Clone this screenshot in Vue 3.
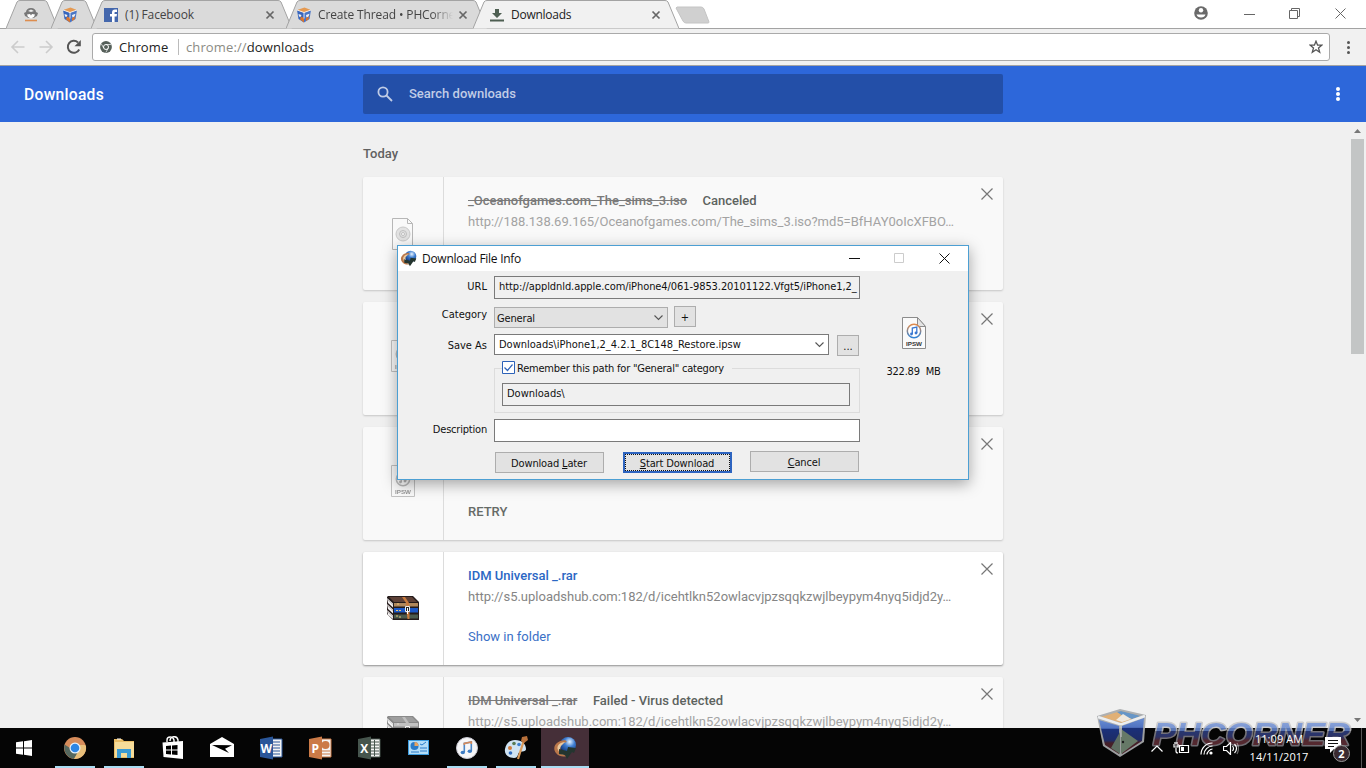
<template>
  <div class="screen">
    <!-- shared icons -->
    <svg class="defs" width="0" height="0">
      <defs>
        <linearGradient id="markFill" x1="0" y1="0" x2="0" y2="1">
          <stop offset="0" stop-color="#8ba5dc" />
          <stop offset=".41" stop-color="#6384cc" />
          <stop offset=".43" stop-color="#2c3d80" />
          <stop offset=".58" stop-color="#343a72" />
          <stop offset=".68" stop-color="#5c2d35" />
          <stop offset="1" stop-color="#6b3038" />
        </linearGradient>
        <linearGradient id="markEdge" x1="0" y1="0" x2="0" y2="1">
          <stop offset="0" stop-color="#cfcfd1" />
          <stop offset=".41" stop-color="#c2c2c5" />
          <stop offset=".43" stop-color="#85838a" />
          <stop offset="1" stop-color="#77747a" />
        </linearGradient>
        <linearGradient id="cubeSide" x1="0" y1="0" x2="0" y2="1">
          <stop offset="0" stop-color="#5b83cf" />
          <stop offset=".26" stop-color="#4468bd" />
          <stop offset=".28" stop-color="#1c3484" />
          <stop offset=".6" stop-color="#21306f" />
          <stop offset=".68" stop-color="#4a222b" />
          <stop offset="1" stop-color="#54252e" />
        </linearGradient>
        <radialGradient id="globe" cx=".6" cy=".3" r=".7">
          <stop offset="0" stop-color="#e8f4ff" />
          <stop offset=".45" stop-color="#3f7fd2" />
          <stop offset="1" stop-color="#143a80" />
        </radialGradient>
        <linearGradient id="note" x1="0" y1="0" x2="0" y2="1">
          <stop offset="0" stop-color="#e08a4a" />
          <stop offset="1" stop-color="#2f83d8" />
        </linearGradient>
      </defs>
      <symbol id="cube" viewBox="0 0 16 16">
        <path d="M1 3 8 5.500v10L2.500 12z" fill="#3665bd" />
        <path d="M15 3 8 5.500v10L13.500 12z" fill="#4a76c6" />
        <path d="M1 3 8.500 0.500 15 3 8 5.800z" fill="#e59a52" />
        <path d="M2.500 7l3 1-1 2-1.500-.5zM10 8l3.500-1.300-1 2.800-2 1z" fill="#f2f2f2" />
        <path d="M5 9.500 8 11v4.500L4 12.500zM10 11l3-1.500-.5 3-2.500 1.500z" fill="#d9752f" />
        <path d="M1 3 8 5.500 15 3M8 5.500v6" stroke="#fff" stroke-width=".8" fill="none" />
      </symbol>
      <symbol id="idm" viewBox="0 0 24 24">
        <circle cx="15" cy="9" r="8" fill="url(#globe)" />
        <path d="M12 4C2 5-1 12 3 17c3 4 8 4 11 3-5-1-8-4-7-8 0-3 2-5 7-6z" fill="#b9774a" />
        <path d="M12 6C7 6 3 10 5 14c1 3 4 5 7 5-4-2-6-5-4-9z" fill="#e9c9a0" />
        <path d="M6 13l8 2 1-4 8 1-2 5-2-1-5 7-2-4-6-1z" fill="#24352f" />
      </symbol>
      <symbol id="ipsw" viewBox="0 0 24 32">
        <path d="M.5.5h15l8 9v22H.5z" fill="#fafafa" stroke="#8c8c8c" />
        <path d="M15.500.5v9h8z" fill="#e4e4e4" stroke="#8c8c8c" />
        <circle cx="12" cy="14" r="6.700" fill="#fff" stroke="url(#note)" stroke-width="1.500" />
        <path d="M10.300 17v-6l4.500-1v6" stroke="#3a78d0" stroke-width="1.300" fill="none" />
        <circle cx="9.500" cy="17" r="1.400" fill="#3a78d0" /><circle cx="14" cy="16" r="1.400" fill="#3a78d0" />
        <text x="12" y="28.500" text-anchor="middle" font-family="Liberation Sans, sans-serif" font-weight="bold" font-size="6" textLength="16" lengthAdjust="spacingAndGlyphs" fill="#333">IPSW</text>
      </symbol>
      <symbol id="iso" viewBox="0 0 24 32">
        <path d="M1.500.5h15l5 5v26h-20z" fill="#fafafa" stroke="#777" />
        <path d="M16.500.5v5h5" fill="none" stroke="#777" />
        <circle cx="12" cy="16" r="7" fill="#ccc" stroke="#999" />
        <circle cx="12" cy="16" r="3.500" fill="none" stroke="#888" />
        <circle cx="12" cy="16" r="1.500" fill="#fff" stroke="#888" />
      </symbol>
      <symbol id="rar" viewBox="0 0 32 24">
        <path d="M1 0h25l6 6v18H6l-6-6V1z" fill="#241b1b" />
        <path d="M2 1h23l5 5H7z" fill="#5d4036" />
        <path d="M7 7h24v3.500H7z" fill="#b0885c" />
        <path d="M7 12h24v4.500H7z" fill="#1b58c8" />
        <path d="M7 18.500h24v4H7z" fill="#4b5b4e" />
        <path d="M0 2l6 5.500v4L1 7zM0 8l6 5.500v4L1 13zM0 14l6 5.500V23l-5-4z" fill="#f1eeee" />
        <path d="M1 4l5 4.700M1 10l5 4.700M1 16l5 4.700" stroke="#9a9494" stroke-width=".6" />
        <path d="M15 1h3l4 6v4h-3V7zM19.500 16h3v7h-2z" fill="#c87a3d" />
        <path d="M18.500 10.500h4v5h-4z" fill="#222" stroke="#eee" /><path d="M20.500 12v6" stroke="#fff" />
        <path d="M9 14.500h2M12 14.500h2M9 20h2M12 21h2M10 8h2" stroke="#e9c678" />
      </symbol>
    </svg>

    <header class="tabstrip">
      <div v-for="tab in tabs" :key="tab.id" class="tab" :class="tab.id">
        <svg class="tab-shape" :width="tab.width" height="29">
          <path :d="tabPath(tab.width)" />
        </svg>
        <svg v-if="tab.id === 'pinned-a'" class="fav" viewBox="0 0 16 16">
          <path d="M1 6l2-1c0-2 2-4 5-4s5 2 5 4l2 1-1 3-2 1-1 1H5l-1-1-2-1z" fill="#777" />
          <path d="M4 7.500l3-.5 1 1.500L9 7l3 .5L11 10l-3 1.500L5 10z" fill="#fff" />
          <path d="M5 4l3-1.500L11 4l-3 1z" fill="#eee" />
          <path d="M2 13.500h12" stroke="#dd8d4f" stroke-width="1.600" />
        </svg>
        <svg v-else-if="tab.id === 'facebook'" class="fav" viewBox="0 0 16 16">
          <path d="M1 1h14v14H1z" fill="#4467ac" />
          <path d="M9 15V9.500H7V7h2V5.500C9 3.500 10 2.500 12 2.500h2V5h-1.500c-.7 0-1 .3-1 1v1H14l-.4 2.500h-2V15z" fill="#fff" />
        </svg>
        <svg v-else-if="tab.id === 'active'" class="fav" viewBox="0 0 16 16">
          <path d="M1 12.500h14v2H1zM6 2h4v4h3l-5 5-5-5h3z" fill="#4e5f52" />
        </svg>
        <svg v-else class="fav"><use href="#cube" /></svg>
        <span v-if="tab.title" class="tab-title">{{ tab.title }}</span>
        <svg v-if="tab.title" class="tab-close" viewBox="0 0 8 8"><path d="M.5.5l7 7M7.500.5l-7 7" /></svg>
      </div>
      <svg class="new-tab" width="36" height="20"><path d="M2 1h24q2 0 3 2l5 13q0 1-1 1H11q-2 0-3-2L1 2z" /></svg>
      <div class="window-buttons">
        <svg width="14" height="14" viewBox="0 0 14 14">
          <circle cx="7" cy="7" r="6.800" fill="#6a6a6a" />
          <circle cx="7" cy="4.300" r="2.200" fill="#fff" />
          <path d="M2.500 8.500h9c-.5 2-2.200 3-4.500 3s-4-1-4.500-3z" fill="#fff" />
        </svg>
        <svg width="11" height="11"><path d="M0 6.500h11" /></svg>
        <svg width="11" height="11"><path d="M.5 2.500h8v8h-8zM2.500 2V.500h8v8H9" /></svg>
        <svg width="11" height="11"><path d="M.5.5l10 10M10.500.5l-10 10" /></svg>
      </div>
    </header>

    <div class="toolbar">
      <svg class="nav" viewBox="0 0 16 16"><path d="M14.500 8H2M8 2L2 8l6 6" /></svg>
      <svg class="nav" viewBox="0 0 16 16"><path d="M1.500 8H14M8 2l6 6-6 6" /></svg>
      <svg class="nav reload" viewBox="0 0 16 16">
        <path d="M13.200 10.500A6 6 0 1 1 12 3.500" /><path class="solid" d="M14.800 1v6.300H8.500z" />
      </svg>
      <div class="omnibox">
        <svg class="chrome-mark" viewBox="0 0 12 12">
          <circle cx="6" cy="6" r="5.900" fill="#56605a" />
          <circle cx="6" cy="6" r="2.500" fill="#56605a" stroke="#fff" stroke-width="1" />
          <path d="M6 3.500h5M3.800 7.200L1.400 3M8.200 7.200L5.800 11.500" stroke="#fff" stroke-width=".7" />
        </svg>
        <span class="origin">Chrome</span>
        <span class="address"><i>chrome://</i>downloads</span>
        <svg class="star" viewBox="0 0 14 14"><path d="M7 1.200l1.600 4h4.200L9.500 7.900l1.200 4.300L7 9.800l-3.700 2.400 1.200-4.300L1.200 5.200h4.200z" /></svg>
      </div>
      <div class="dots"><b></b><b></b><b></b></div>
    </div>

    <div class="page-header">
      <h1>Downloads</h1>
      <div class="search">
        <svg width="16" height="16" viewBox="0 0 16 16"><circle cx="6" cy="6" r="4.600" /><path d="M9.500 9.500l5.500 5.500" /></svg>
        <span>Search downloads</span>
      </div>
      <div class="dots light"><b></b><b></b><b></b></div>
    </div>

    <main class="page">
      <div class="list">
        <h2>Today</h2>
        <div v-for="(item, i) in downloads" :key="i" class="card" :class="{ faded: !item.done }">
          <div class="card-icon">
            <svg :class="item.icon"><use :href="'#' + item.icon" /></svg>
          </div>
          <div class="card-body">
            <div class="card-title">
              <span class="name">{{ item.name }}</span><span class="status">{{ item.status }}</span>
            </div>
            <div class="card-url">{{ item.url }}</div>
            <div class="card-action">{{ item.action }}</div>
          </div>
          <svg class="card-close" viewBox="0 0 12 12"><path d="M.5.5l11 11M11.500.5l-11 11" /></svg>
        </div>
      </div>
      <div class="scrollbar">
        <svg width="7" height="4"><path d="M0 4l3.500-4L7 4z" /></svg>
        <div class="thumb"></div>
        <svg width="7" height="4"><path d="M0 0l3.500 4L7 0z" /></svg>
      </div>
    </main>

    <section class="dialog">
      <div class="dialog-title">
        <svg width="17" height="17"><use href="#idm" /></svg>
        <span>Download File Info</span>
        <div class="dialog-buttons">
          <svg width="11" height="11"><path d="M0 5.500h11" /></svg>
          <svg width="11" height="11" class="off"><path d="M.5.5h9v9h-9z" /></svg>
          <svg width="11" height="11"><path d="M.5.5l10 10M10.500.5l-10 10" /></svg>
        </div>
      </div>
      <div class="dialog-body">
        <div class="form">
          <div class="row url-row">
            <label>URL</label>
            <div class="field"><span class="t-url">http://appldnld.apple.com/iPhone4/061-9853.20101122.Vfgt5/iPhone1,2_</span></div>
          </div>
          <div class="row category-row">
            <label>Category</label>
            <div class="select"><span>General</span><svg width="9" height="6"><path d="M.5.5l4 4 4-4" /></svg></div>
            <div class="mini">+</div>
          </div>
          <div class="row save-row">
            <label>Save As</label>
            <div class="field combo"><span>Downloads\iPhone1,2_4.2.1_8C148_Restore.ipsw</span><svg width="9" height="6"><path d="M.5.5l4 4 4-4" /></svg></div>
            <div class="mini">...</div>
          </div>
          <div class="group">
            <div class="check">
              <svg width="13" height="13"><path class="box" d="M.5.5h12v12H.5z" /><path d="M2.500 6.500l3 3 5-6" /></svg>
              <span>Remember this path for "General" category</span>
            </div>
            <div class="field path">Downloads\</div>
          </div>
          <div class="row desc-row">
            <label>Description</label>
            <div class="field white"></div>
          </div>
          <div class="actions">
            <div class="btn"><span>Download <u>L</u>ater</span></div>
            <div class="btn primary"><span><u>S</u>tart Download</span></div>
            <div class="btn cancel"><span><u>C</u>ancel</span></div>
          </div>
        </div>
        <div class="file">
          <svg width="24" height="32"><use href="#ipsw" /></svg>
          <span>322.89&nbsp; MB</span>
        </div>
      </div>
    </section>

    <footer class="taskbar">
      <div class="task start">
        <svg width="16" height="16"><path d="M0 2.200L7 1.300v6.200H0zM8 1.200L16 0v7.500H8zM0 8.500h7v6.200l-7-.9zM8 8.500h8V16l-8-1.200z" fill="#fff" /></svg>
      </div>
      <div class="task open">
        <svg viewBox="0 0 24 24">
          <circle cx="12" cy="12" r="11" fill="#d68c5b" />
          <path d="M1.500 8.500C0 15 4 22 11 23l5-8-4-3H7z" fill="#55685f" />
          <path d="M23 10c1 7-4 13-12 13l5-9V9h6z" fill="#e8bf7b" />
          <circle cx="12" cy="12" r="5.500" fill="#e8f1fa" /><circle cx="12" cy="12" r="4.300" fill="#2e86e4" />
        </svg>
      </div>
      <div class="task open">
        <svg viewBox="0 0 24 24">
          <path d="M2 3h8l2 2h10v17H2z" fill="#e9bd66" /><path d="M3 6h19v15H3z" fill="#f6dc99" />
          <path d="M5 13h14v9h-4v-5H9v5H5z" fill="#3b9bd4" /><path d="M5 3h4" stroke="#fff" stroke-width="1" />
        </svg>
      </div>
      <div class="task">
        <svg viewBox="0 0 24 24">
          <path d="M1.500 6.500L22 5v18L2.500 21z" fill="#fff" />
          <path d="M6 6V4c0-4 6-4 7 0v2M9 5c0-5 7-6 8-1v2" fill="none" stroke="#fff" stroke-width="1.400" />
          <path d="M5 10l5-.5v4H5zM11 9.500l5.500-.5v4.500H11zM5 14.500h5v4L5 18zM11 14.500h5.500V19l-5.500-.5z" fill="#000" />
        </svg>
      </div>
      <div class="task">
        <svg viewBox="0 0 24 24"><path d="M0 8l12-7 12 7v13H0z" fill="#fff" /><path d="M2 9l20 .3-7 3.500 4 4.200z" fill="#000" /></svg>
      </div>
      <div v-for="app in office" :key="app.letter" class="task">
        <svg viewBox="0 0 24 24">
          <path d="M11 3h12v18H11z" fill="#f4f4f4" :stroke="app.color" />
          <path v-if="app.letter === 'W'" d="M13 6h8M13 9h8M13 12h8M13 15h8M13 18h8" :stroke="app.color" />
          <path v-else-if="app.letter === 'X'" d="M13 6h9M13 9h9M13 12h9M13 15h9M13 18h9M17.500 4v16" :stroke="app.color" />
          <g v-else><circle cx="17.500" cy="9" r="4" :fill="app.color" /><path d="M14 15h8M14 18h8" :stroke="app.color" /></g>
          <path d="M1 3l13-2.500v23L1 21z" :fill="app.color" />
          <text x="7.300" y="16.500" text-anchor="middle" class="office-letter">{{ app.letter }}</text>
        </svg>
      </div>
      <div class="task">
        <svg viewBox="0 0 24 24">
          <path d="M2 4h21v15H2z" fill="#3d9de0" /><path d="M3 5h19v13H3z" fill="#b3ddf8" />
          <circle cx="8.500" cy="10" r="4" fill="#2b7bc8" /><path d="M8.500 10V6a4 4 0 0 1 4 4z" fill="#e9a35f" />
          <path d="M14 8l2 1 4-3M14 12h7M14 15h7M5 16h8" stroke="#2b7bc8" fill="none" />
        </svg>
      </div>
      <div class="task open">
        <svg viewBox="0 0 24 24">
          <circle cx="12" cy="12" r="10.500" fill="#f6f6f8" stroke="#c9c9d2" />
          <path d="M9.300 16V7.500l7-1.500v9" fill="none" stroke="#4b86c5" stroke-width="1.600" />
          <path d="M9.300 9v-1.500l7-1.500v2" fill="none" stroke="#d68a5a" stroke-width="1.600" />
          <ellipse cx="7.800" cy="16.500" rx="2.200" ry="1.800" fill="#3d7cc4" /><ellipse cx="14.800" cy="15.300" rx="2.200" ry="1.800" fill="#3d7cc4" />
        </svg>
      </div>
      <div class="task open">
        <svg viewBox="0 0 24 24">
          <path d="M11 4c7 0 11 4 11 9 0 3-4 2-6 3-3 1-1 6-6 6C4 22 0 18 1 13c1-6 5-9 10-9z" fill="#cfe3f3" />
          <circle cx="6" cy="12" r="2" fill="#cf7c3d" /><circle cx="10" cy="7.500" r="1.800" fill="#587b53" />
          <circle cx="6.500" cy="17" r="1.800" fill="#2e6ac0" /><circle cx="15" cy="8.500" r="1.800" fill="#3d80cf" />
          <path d="M20 4l-6 19" stroke="#d99a5b" stroke-width="2.200" /><path d="M18 1l5-1 1 4-4 3-3-2z" fill="#b9713b" />
        </svg>
      </div>
      <div class="task current">
        <svg><use href="#idm" /></svg>
      </div>
      <div class="tray">
        <svg width="12" height="7"><path d="M.5 6.500L6 1l5.500 5.500" /></svg>
        <svg width="17" height="13">
          <path d="M6.500 3.500h9v7h-9zM3 6v3q0 2 2 2M1 2v3h4V2M2 0v2M4 0v2" /><path d="M8 5h3v4H8z" class="fill" />
        </svg>
        <svg width="13" height="13">
          <path d="M1 12.500C1 6 6 1 12.500 1M4 12.500C4 8 8 4 12.500 4M7 12.500C7 10 10 7 12.500 7" /><circle cx="11" cy="11" r="1.600" class="fill" />
        </svg>
        <svg width="16" height="13">
          <path d="M.5 4.500h3l4-4v12l-4-4h-3zM9.500 4q2 2.500 0 5M11.500 2q4 4.500 0 9" /><path d="M14 1q3 5.500 0 11" opacity=".4" />
        </svg>
        <div class="clock"><span>11:09 AM</span><span>14/11/2017</span></div>
        <div class="notice">
          <svg width="17" height="18"><path d="M0 0h16v12H9l-4 4v-4H0z" class="fill solid" /><path d="M3 3.500h10M3 6.500h10M3 9.500h6" class="line" /></svg>
          <span class="badge">2</span>
        </div>
        <i class="peek"></i>
      </div>
    </footer>

    <!-- watermark over the page corner -->
    <svg class="watermark" width="270" height="56" viewBox="0 0 270 56">
      <g opacity=".92">
        <path d="M1 9L24 2l26 6-2 27-24 15L7 39z" fill="#a9abad" />
        <path d="M3 13l20 6v28L9 38z" fill="url(#cubeSide)" />
        <path d="M26 19l22-8-2 23-20 13z" fill="url(#cubeSide)" />
        <path d="M25 22l17 12-17 13z" fill="#6f8370" />
        <path d="M24 25v22l-9-6z" fill="#66796a" />
        <path d="M5 10l20-6 20 5-19 7z" fill="#e0ab6c" />
        <path d="M25 4l20 5-9 3-9-3-6-4z" fill="#5c8fc4" />
        <path d="M27 7l8 5-9 3-6-2z" fill="#f0e8dc" />
        <path d="M2 10l23 7.500L49 9" stroke="#eceef0" stroke-width="2.500" fill="none" />
        <path d="M25 18v12" stroke="#bfc2c2" stroke-width="1.500" fill="none" />
        <circle cx="27" cy="35" r="1.200" fill="#1e1e1e" />
      </g>
      <text x="57" y="38" textLength="197" lengthAdjust="spacingAndGlyphs">PHCORNER</text>
    </svg>
  </div>
</template>

<script setup>
import { ref } from 'vue'

const tabs = ref([
  { id: 'pinned-a', width: 52 },
  { id: 'pinned-b', width: 46 },
  { id: 'facebook', width: 201, title: '(1) Facebook' },
  { id: 'thread', width: 201, title: 'Create Thread • PHCorner' },
  { id: 'active', width: 206, title: 'Downloads' },
])

const downloads = ref([
  {
    name: '_Oceanofgames.com_The_sims_3.iso',
    status: 'Canceled',
    url: 'http://188.138.69.165/Oceanofgames.com/The_sims_3.iso?md5=BfHAY0oIcXFBO…',
    icon: 'iso',
  },
  { icon: 'ipsw' },
  { icon: 'ipsw', action: 'RETRY' },
  {
    name: 'IDM Universal _.rar',
    url: 'http://s5.uploadshub.com:182/d/icehtlkn52owlacvjpzsqqkzwjlbeypym4nyq5idjd2y…',
    icon: 'rar',
    action: 'Show in folder',
    done: true,
  },
  {
    name: 'IDM Universal _.rar',
    status: 'Failed - Virus detected',
    url: 'http://s5.uploadshub.com:182/d/icehtlkn52owlacvjpzsqqkzwjlbeypym4nyq5idjd2y…',
    icon: 'rar',
  },
])

const office = [
  { letter: 'W', color: '#2a5699' },
  { letter: 'P', color: '#cb7a47' },
  { letter: 'X', color: '#46554d' },
]

function tabPath(w) {
  return `M0 28.500L11 2Q12 .5 14 .5H${w - 14}Q${w - 12} .5 ${w - 11} 2L${w} 28.500`
}
</script>

<style>
body {
  margin: 0;
  overflow: hidden;
}
</style>

<style scoped>
.screen {
  position: relative;
  width: 1366px;
  height: 768px;
  overflow: hidden;
  display: flex;
  flex-direction: column;
  background: #f0f0f0;
  font-family: Roboto, sans-serif;
  font-size: 13px;
}

.screen * {
  box-sizing: border-box;
}

.defs {
  position: absolute;
}

svg {
  flex: none;
  display: block;
}

/* tabs */
.tabstrip {
  height: 28px;
  flex: none;
  display: flex;
  background: #fff;
  padding-left: 6px;
  font-family: "Open Sans", "Noto Sans", sans-serif;
  font-size: 12px;
}

.tab {
  position: relative;
  height: 29px;
  display: flex;
  align-items: center;
  flex: none;
  color: #444;
}

.tab-shape {
  position: absolute;
  left: 0;
  top: 0;
}

.tab-shape path {
  fill: #dadada;
  stroke: #a3a3a3;
}

.pinned-a { width: 52px; padding-left: 17px; }
.pinned-b { width: 46px; margin-left: -7px; padding-left: 11px; }
.facebook { width: 201px; margin-left: -6px; padding-left: 12px; }
.thread { width: 201px; margin-left: -6px; padding-left: 10px; }
.active { width: 206px; margin-left: -14px; padding-left: 16px; z-index: 2; }

.active .tab-shape path {
  fill: #f1f1f1;
}

.fav {
  position: relative;
  width: 16px;
  height: 16px;
}

.tab-title {
  position: relative;
  white-space: nowrap;
  overflow: hidden;
  margin-left: 7px;
  letter-spacing: -0.13px;
}

.facebook .tab-title {
  margin-left: 6px;
  width: 141px;
}

.thread .tab-title {
  width: 135px;
  margin-left: 6px;
  -webkit-mask-image: linear-gradient(90deg, #000 84%, transparent);
  mask-image: linear-gradient(90deg, #000 84%, transparent);
}

.active .tab-title {
  width: 141px;
  margin-left: 6px;
  color: #222;
  letter-spacing: -0.25px;
}

.thread .tab-close {
  margin-left: 6px;
}

.tab-close {
  position: relative;
  width: 8px;
  height: 8px;
  overflow: visible;
}

.tab-close path {
  stroke: #666;
  stroke-width: 1.7;
}

.new-tab {
  margin: 6px 0 0 -4px;
}

.new-tab path {
  fill: #d0d0d0;
  stroke: #c4c4c4;
}

.window-buttons {
  margin-left: auto;
  padding: 6px 20px 0 0;
  display: flex;
  align-items: center;
  height: 20px;
  gap: 34px;
}

.window-buttons path {
  stroke: #666;
  fill: none;
}

.window-buttons svg:first-child { margin-right: 2px; }
.window-buttons svg:first-child path { stroke: none; fill: #fff; }
.window-buttons svg:last-child { margin-left: 1px; }

/* toolbar */
.toolbar {
  height: 38px;
  flex: none;
  display: flex;
  align-items: center;
  padding-left: 10px;
  background: #f1f1f1;
  border-top: 1px solid #a3a3a3;
  border-bottom: 1px solid #a3a3a3;
}

.nav {
  width: 16px;
  height: 16px;
  margin-right: 12px;
}

.nav path {
  fill: none;
  stroke: #ccc;
  stroke-width: 1.6;
}

.nav.reload { margin-right: 10px; }
.nav.reload path { stroke: #555; stroke-width: 2; }
.nav.reload .solid { fill: #555; stroke: none; }

.omnibox {
  width: 1238px;
  height: 28px;
  background: #fff;
  border: 1px solid #aaa;
  border-radius: 3px;
  display: flex;
  align-items: center;
  padding: 0 6px 0 7px;
  font-family: "Open Sans", "Noto Sans", sans-serif;
  font-size: 13px;
  letter-spacing: 0.12px;
  color: #222;
}

.chrome-mark {
  width: 12px;
  height: 12px;
}

.origin {
  margin-left: 7px;
  width: 60px;
  border-right: 1px solid #bbb;
  line-height: 16px;
}

.address {
  margin-left: 7px;
}

.address i {
  font-style: normal;
  color: #8b8b84;
}

.star {
  width: 14px;
  height: 14px;
  margin-left: auto;
}

.star path {
  fill: none;
  stroke: #555;
  stroke-width: 1.3;
}

.dots {
  display: flex;
  flex-direction: column;
  gap: 2px;
  margin-left: 17px;
}

.dots b {
  width: 3px;
  height: 3px;
  border-radius: 50%;
  background: #555;
}

/* blue page header */
.page-header {
  height: 56px;
  flex: none;
  display: flex;
  align-items: center;
  background: #2d67da;
  padding: 0 26px 0 24px;
  color: #fff;
}

h1 {
  margin: 0;
  padding-top: 1px;
  width: 339px;
  font-size: 15.600px;
  font-weight: 500;
  letter-spacing: 0.3px;
}

.search {
  width: 640px;
  height: 40px;
  border-radius: 2px;
  background: #234fa8;
  display: flex;
  align-items: center;
  padding: 0 0 1px 14px;
  color: #c0cce6;
  font-weight: 500;
}

.search svg {
  fill: none;
  stroke: #c0cce6;
  stroke-width: 1.8;
  margin-right: 16px;
}

.dots.light {
  margin: 0 0 1px auto;
  gap: 1px;
}

.dots.light b {
  background: #fff;
  width: 4px;
  height: 4px;
}

/* downloads list */
.page {
  flex: 1;
  min-height: 0;
  display: flex;
  justify-content: space-between;
  overflow: hidden;
}

.list {
  width: 640px;
  margin-left: 363px;
}

h2 {
  margin: 23px 0 0;
  height: 32px;
  line-height: 17px;
  font-size: 13px;
  font-weight: 500;
  color: #616161;
}

.card {
  height: 113px;
  margin-bottom: 12px;
  display: flex;
  background: #fff;
  border-radius: 2px;
  box-shadow: 0 1px 2px rgba(0, 0, 0, 0.4);
}

.card.faded {
  background: #f9f9f9;
  box-shadow: 0 1px 2px rgba(0, 0, 0, 0.18);
}

.card-icon {
  width: 81px;
  border-right: 1px solid #dcdcdc;
  display: flex;
  align-items: center;
  justify-content: center;
}

.card-icon svg {
  width: 24px;
  height: 32px;
}

.card-icon svg.ipsw {
  margin-bottom: 5px;
}

.card-icon svg.rar {
  width: 32px;
  height: 24px;
  margin-bottom: 2px;
}

.faded .card-icon svg {
  filter: grayscale(1);
  opacity: 0.5;
}

.faded .card-icon svg.rar {
  margin-bottom: 11px;
}

.card-body {
  padding: 14px 0 0 24px;
  width: 538px;
  white-space: nowrap;
}

.card-title {
  height: 20px;
  line-height: 19px;
  font-weight: 500;
  color: #5d635f;
}

.name {
  color: #2b67c4;
}

.faded .name {
  color: #7a7a7a;
  text-decoration: line-through;
}

.status {
  margin-left: 15.500px;
}

.card-url {
  height: 21px;
  line-height: 21px;
  color: #858585;
}

.faded .card-url {
  color: #a3a3a3;
}

.card-action {
  margin-top: 20px;
  line-height: 20px;
  color: #3a70c6;
}

.faded .card-action {
  color: #666b67;
  font-weight: 500;
}

.card-close {
  width: 12px;
  height: 12px;
  margin: 10.500px 0 0 -1px;
}

.card-close path {
  stroke: #777;
  stroke-width: 1.2;
}

.scrollbar {
  width: 17px;
  display: flex;
  flex-direction: column;
  align-items: center;
  padding: 7px 2px 6px 2px;
}

.scrollbar path {
  fill: #777;
}

.thumb {
  width: 13px;
  height: 215px;
  margin: 6px 0 auto;
  background: #c3c5c5;
}

/* dialog */
.dialog {
  position: absolute;
  left: 397px;
  top: 245px;
  width: 572px;
  height: 235px;
  border: 1px solid #4c9fd3;
  background: #f0f0f0;
  box-shadow: 0 4px 14px rgba(0, 0, 0, 0.35);
  font-family: "DejaVu Sans Condensed", "Noto Sans", sans-serif;
  font-size: 11px;
  color: #111;
  white-space: nowrap;
}

.dialog-title {
  height: 25px;
  display: flex;
  align-items: center;
  padding: 0 18px 0 3px;
  background: #fff;
  font-family: "Open Sans", "Noto Sans", sans-serif;
  font-size: 12px;
}

.dialog-title > svg {
  margin: 0 0 1px -1px;
}

.dialog-title span {
  margin: 0 0 1px 5px;
  letter-spacing: -0.28px;
}

.dialog-buttons {
  display: flex;
  margin-left: auto;
  gap: 34px;
}

.dialog-buttons path {
  stroke: #111;
  fill: none;
}

.dialog-buttons .off path {
  stroke: #ccc;
}

.dialog-body {
  display: flex;
  padding-top: 5px;
}

.form {
  width: 462px;
}

.row {
  display: flex;
}

label {
  width: 89px;
  margin-right: 7px;
  text-align: right;
  line-height: 22px;
}

.field {
  flex: 1;
  height: 23px;
  border: 1px solid #7a7a7a;
  padding-left: 4px;
  line-height: 20px;
  overflow: hidden;
}

.field.white,
.field.combo {
  background: #fff;
}

.t-url {
  letter-spacing: -0.08px;
}

.category-row { margin-top: 7px; }
.category-row label { line-height: 17px; }

.select {
  width: 174px;
  height: 21px;
  margin: 1px 6px 0 0;
  border: 1px solid #adadad;
  background: #e2e2e2;
  display: flex;
  align-items: center;
  justify-content: space-between;
  padding: 0 4px 0 2px;
  letter-spacing: -0.15px;
}

.select span {
  padding-top: 1px;
}

.select path,
.combo path {
  fill: none;
  stroke: #555;
  stroke-width: 1.1;
}

.mini {
  width: 22px;
  height: 21px;
  border: 1px solid #adadad;
  background: #e2e2e2;
  text-align: center;
  line-height: 21px;
}

.save-row { margin-top: 6px; height: 22px; }
.save-row label { line-height: 23px; }
.save-row .mini { margin: 1px 1px 0 8px; line-height: 21px; }

.combo {
  height: 21px;
  display: flex;
  align-items: center;
  justify-content: space-between;
  padding-right: 4px;
}

.group {
  margin: 12px 0 0 96px;
  height: 45px;
  border: 1px solid #dcdcdc;
  padding: 0 9px 0 7px;
}

.check {
  display: flex;
  align-items: center;
  width: 230px;
  height: 15px;
  margin-top: -9px;
  background: #f0f0f0;
}

.check svg {
  fill: none;
  stroke: #2d62b8;
  stroke-width: 1.2;
}

.check .box {
  fill: #fff;
  stroke-width: 1;
}

.check span {
  margin-left: 2px;
  padding-top: 1px;
  letter-spacing: -0.22px;
}

.path {
  margin-top: 8px;
}

.desc-row { margin-top: 6px; }
.desc-row label { letter-spacing: -0.2px; }

.actions {
  margin: 9px 1px 0 97px;
  display: flex;
  align-items: flex-start;
  letter-spacing: -0.15px;
}

.btn {
  width: 109px;
  height: 21px;
  margin-top: 1px;
  border: 1px solid #adadad;
  background: #e2e2e2;
  text-align: center;
  line-height: 21px;
  padding-right: 1px;
}

.btn.primary {
  margin-left: 19px;
  border: 2px solid #2d64c0;
  outline: 1px dotted #111;
  outline-offset: -3px;
  line-height: 19px;
}

.btn.cancel {
  margin: 0 0 0 18px;
}

.file {
  flex: 1;
  display: flex;
  flex-direction: column;
  align-items: center;
  padding: 41px 1px 0 0;
}

.file span {
  margin-top: 16px;
  letter-spacing: -0.2px;
}

/* taskbar */
.taskbar {
  height: 40px;
  flex: none;
  display: flex;
  background: #050505;
  color: #fff;
}

.task {
  width: 49px;
  height: 40px;
  display: flex;
  align-items: center;
  justify-content: center;
}

.task.start {
  width: 50px;
  padding-right: 2px;
}

.task svg {
  width: 24px;
  height: 24px;
}

.task.start svg {
  width: 16px;
  height: 16px;
}

.task.open {
  background: linear-gradient(#a9dcf2, #a9dcf2) center bottom / 40px 2px no-repeat;
}

.task.current {
  margin-left: 1px;
  width: 48px;
  background: linear-gradient(#a9dcf2, #a9dcf2) center bottom / 48px 2px no-repeat #452f38;
}

.office-letter {
  font: bold 12px "Open Sans", sans-serif;
  fill: #fff;
}

.tray {
  position: relative;
  z-index: 3;
  margin-left: auto;
  display: flex;
  align-items: center;
}

.tray svg path {
  fill: none;
  stroke: #fff;
  stroke-width: 1.2;
}

.tray svg .fill {
  fill: #fff;
  stroke: none;
}

.tray svg { margin-right: 10px; }

.clock {
  width: 66px;
  margin: 0 13px 0 -3px;
  display: flex;
  flex-direction: column;
  align-items: center;
  font-family: "Open Sans", "Noto Sans", sans-serif;
  font-size: 11px;
  line-height: 18px;
  letter-spacing: 0.05px;
}

.notice {
  position: relative;
  width: 25px;
  height: 24px;
}

.notice svg { margin: 1px 0 0; }
.notice svg .line { stroke: #111; }

.badge {
  position: absolute;
  right: 0;
  top: 9px;
  width: 17px;
  height: 17px;
  border: 1px solid #999;
  border-radius: 50%;
  background: #3a2a30;
  font: bold 11px/15px "Open Sans", sans-serif;
  text-align: center;
}

.peek {
  width: 1px;
  height: 40px;
  margin: 0 4px 0 11px;
  background: #555;
}

.watermark {
  position: absolute;
  left: 1096px;
  top: 707px;
}

.watermark text {
  font: italic bold 32px "Liberation Sans", sans-serif;
  fill: url(#markFill);
  stroke: url(#markEdge);
  stroke-width: 3;
  stroke-linejoin: round;
  paint-order: stroke;
  opacity: 0.88;
}
</style>
